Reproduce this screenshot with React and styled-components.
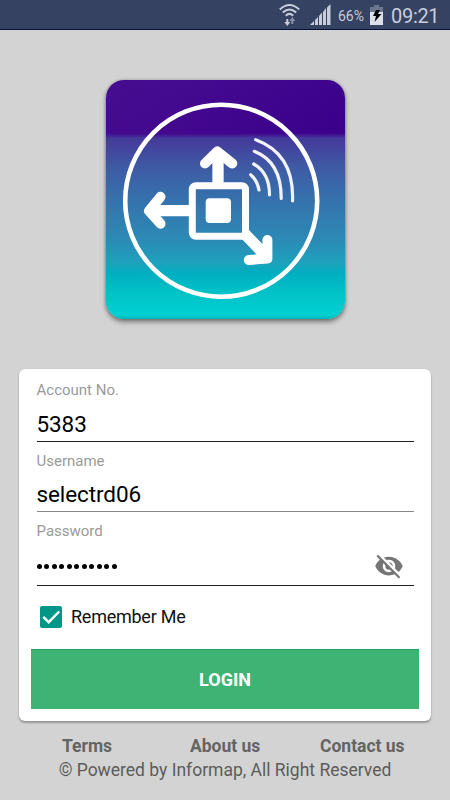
import styled, { createGlobalStyle } from "styled-components";

const GlobalStyle = createGlobalStyle`
  * {
    box-sizing: border-box;
  }
  body {
    margin: 0;
    background: #d3d3d3;
    font-family: Roboto, "Liberation Sans", sans-serif;
  }
`;

const Screen = styled.div`
  display: flex;
  flex-direction: column;
  align-items: center;
  width: 450px;
  height: 800px;
  overflow: hidden;
  background: #d3d3d3;
`;

const StatusBar = styled.header`
  display: flex;
  align-items: center;
  justify-content: flex-end;
  width: 100%;
  height: 30px;
  padding-right: 11px;
  background: #354261;
  border-bottom: 1px solid #05103b;
  color: #c8cddc;

  svg {
    display: block;
    flex: none;
  }
`;

const BatteryLevel = styled.span`
  width: 27px;
  margin: 2px 5px 0 6px;
  font-size: 14px;
  line-height: 20px;
  white-space: nowrap;
`;

const Clock = styled.span`
  width: 48px;
  margin-left: 8px;
  padding-top: 2px;
  font-size: 20px;
  line-height: 24px;
  letter-spacing: -0.3px;
  white-space: nowrap;
`;

const Logo = styled.div`
  width: 239px;
  height: 239px;
  margin-top: 50px;
  border-radius: 18px;
  overflow: hidden;
  background:
    linear-gradient(100deg, rgba(80, 30, 145, 0.35), rgba(50, 0, 135, 0.3)) top / 100% 54px no-repeat,
    linear-gradient(#420490 0, #3f008d 53px, #45399a 58px, #3e5ba5 88px, #366fac 116px, #2c8ab5 160px, #1ca3bd 184px, #02adc0 192px, #00c2c7 213px, #00d0d2 235px, #00b5b8 239px);
  box-shadow: 0 3px 5px rgba(0, 0, 0, 0.42), 0 0 3px rgba(0, 0, 0, 0.25);

  svg {
    display: block;
  }
`;

const Card = styled.form`
  display: flex;
  flex-direction: column;
  width: 412px;
  height: 352px;
  margin-top: 50px;
  padding: 11px 12px 0;
  border-radius: 6px;
  background: #fff;
  box-shadow: 0 2px 2px rgba(0, 0, 0, 0.28), 0 0 1px rgba(0, 0, 0, 0.2);
`;

const Field = styled.div`
  display: flex;
  flex-direction: column;
  height: ${({ $height }) => $height}px;
  margin: 0 5.5px;
  padding-top: ${({ $top }) => $top || 0}px;
  border-bottom: 1px solid ${({ $line }) => $line || "#222"};
`;

const Label = styled.span`
  height: 20px;
  font-size: 15px;
  line-height: 20px;
  color: #9a9a9a;
`;

const Value = styled.div`
  display: flex;
  flex: 1;
  align-items: center;
  justify-content: space-between;
  padding-top: 6px;
  font-size: 22.5px;
  letter-spacing: -0.1px;
  color: #000;
`;

const Dots = styled.span`
  display: flex;
  gap: 2.5px;

  i {
    width: 5px;
    height: 5px;
    border-radius: 50%;
    background: #000;
  }
`;

const EyeIcon = styled.svg`
  width: 30px;
  height: 30px;
  margin-right: 10px;
`;

const Remember = styled.label`
  display: flex;
  align-items: center;
  gap: 9px;
  height: 63px;
  padding: 0 0 2px 9px;
  font-size: 18px;
  letter-spacing: -0.25px;
  color: #111;
`;

const Check = styled.span`
  display: flex;
  width: 22px;
  height: 22px;
  border-radius: 2px;
  background: #009688;
`;

const LoginButton = styled.button`
  height: 60px;
  padding: 0;
  border: 0;
  border-top: 1px solid #1ea863;
  background: #3eb373;
  color: #fff;
  font: 700 18px Roboto, sans-serif;
`;

const Links = styled.nav`
  display: flex;
  width: 100%;
  height: 24px;
  margin-top: 13px;
  padding-left: 62px;
  font-size: 17.5px;
  font-weight: 700;
  line-height: 24px;
  color: #646464;
`;

const Link = styled.span`
  width: ${({ $width }) => $width}px;
  white-space: nowrap;
`;

const Copyright = styled.p`
  margin: 0;
  font-size: 17.5px;
  line-height: 24px;
  color: #5c5c5c;
  white-space: nowrap;
`;

const WifiIcon = styled(({ className }) => (
  <svg className={className} width="22" height="24" viewBox="0 0 22 24" fill="none" stroke="#c8cddc" strokeWidth="2">
    <path d="M.8 6.500Q10.500-2.500 20.200 6.500M3.800 9.600Q10.500 3.300 17.200 9.600M6.800 12.700Q10.500 9 14.200 12.700" />
    <path d="M8.300 16v4" />
    <path d="M5.300 19h6l-3 4z" fill="#c8cddc" stroke="none" />
    <path d="M13.300 21v-4" stroke="#8791a8" />
    <path d="M10.300 18h6l-3-4z" fill="#8791a8" stroke="none" />
  </svg>
))`
  margin-right: 9px;
`;

const SignalIcon = () => (
  <svg width="22" height="22" viewBox="0 0 22 22" fill="#c8cddc">
    <path d="M0 21L4 17v4zM5 16l3-3v8H5zM9 12l3-3.500V21H9zM13 8l3-4v17h-3zM17 3.500L20.500 0v21H17z" />
  </svg>
);

const BatteryIcon = () => (
  <svg width="13" height="20" viewBox="0 0 13 20">
    <path d="M4 0h5v2h4v6H0V2h4z" fill="#6b768f" />
    <path d="M0 7h13v13H0z" fill="#dde0e9" />
    <path d="M6 5h4L8 9h3.500l-7 8 1.500-6H3z" fill="#000" />
  </svg>
);

const LogoArt = () => (
  <svg width="239" height="239" viewBox="106 80 239 239" fill="none" stroke="#fff" strokeLinecap="round" strokeLinejoin="round">
    <circle cx="221.200" cy="200.700" r="96" strokeWidth="4.600" />
    <rect x="192.300" y="185.700" width="53.200" height="50.600" rx="3.500" strokeWidth="7" />
    <rect x="205.700" y="198.300" width="25.300" height="24.700" rx="4" fill="#fff" stroke="none" />
    <g strokeWidth="10">
      <path d="M205 163.500L217.200 151.500 232.300 163.500" />
      <path d="M217.500 153v8" />
      <path d="M160.500 196.800L149 211 160.500 223.700" />
      <path d="M152 211h8" />
      <path d="M267.400 240V258.500L248.800 260" />
    </g>
    <g strokeWidth="11.300" strokeLinecap="butt">
      <path d="M218 155v30M154 210.700h38M243.500 232.500L265 255" />
    </g>
    <g stroke="#f2f3fa" strokeWidth="3.200">
      <path d="M250.700 174.700Q257.500 180.500 259 190" />
      <path d="M253.700 164Q269.500 173 269.500 194.800" />
      <path d="M254.300 151.300Q281.500 162 281.200 198.400" />
      <path d="M255.700 139.700Q294.500 154 292.500 201" />
    </g>
  </svg>
);

const App = () => {
  return (
    <Screen>
      <GlobalStyle />
      <StatusBar>
        <WifiIcon />
        <SignalIcon />
        <BatteryLevel>66%</BatteryLevel>
        <BatteryIcon />
        <Clock>09:21</Clock>
      </StatusBar>
      <Logo>
        <LogoArt />
      </Logo>
      <Card>
        <Field $height={62}>
          <Label>Account No.</Label>
          <Value>5383</Value>
        </Field>
        <Field $height={70} $top={9} $line="#888">
          <Label>Username</Label>
          <Value>selectrd06</Value>
        </Field>
        <Field $height={74} $top={9}>
          <Label>Password</Label>
          <Value>
            <Dots>
              {Array.from({ length: 11 }, (_, i) => (
                <i key={i} />
              ))}
            </Dots>
            <EyeIcon viewBox="0 0 24 24" fill="#757575">
              <path d="M12 7c2.760 0 5 2.240 5 5 0 .65-.13 1.260-.36 1.830l2.920 2.920c1.510-1.260 2.700-2.890 3.430-4.750-1.730-4.390-6-7.500-11-7.500-1.400 0-2.740.25-3.980.7l2.160 2.160C10.740 7.130 11.350 7 12 7zM2 4.270l2.280 2.280.46.46C3.080 8.300 1.780 10.020 1 12c1.730 4.390 6 7.500 11 7.500 1.550 0 3.030-.3 4.380-.84l.42.42L19.730 22 21 20.730 3.270 3 2 4.270zM7.530 9.800l1.550 1.550c-.05.21-.08.43-.08.65 0 1.660 1.340 3 3 3 .22 0 .44-.03.65-.08l1.550 1.550c-.67.33-1.410.53-2.200.53-2.760 0-5-2.240-5-5 0-.79.2-1.530.53-2.200zm4.310-.78l3.150 3.150.02-.16c0-1.660-1.340-3-3-3l-.17.01z" />
            </EyeIcon>
          </Value>
        </Field>
        <Remember>
          <Check>
            <svg width="22" height="22" viewBox="0 0 22 22" fill="none" stroke="#fff" strokeWidth="2.400">
              <path d="M3.300 10.900L8.700 16.200 19.200 5.500" />
            </svg>
          </Check>
          Remember Me
        </Remember>
        <LoginButton type="button">LOGIN</LoginButton>
      </Card>
      <Links>
        <Link $width={128}>Terms</Link>
        <Link $width={130}>About us</Link>
        <Link $width={90}>Contact us</Link>
      </Links>
      <Copyright>© Powered by Informap, All Right Reserved</Copyright>
    </Screen>
  );
};

export default App;
